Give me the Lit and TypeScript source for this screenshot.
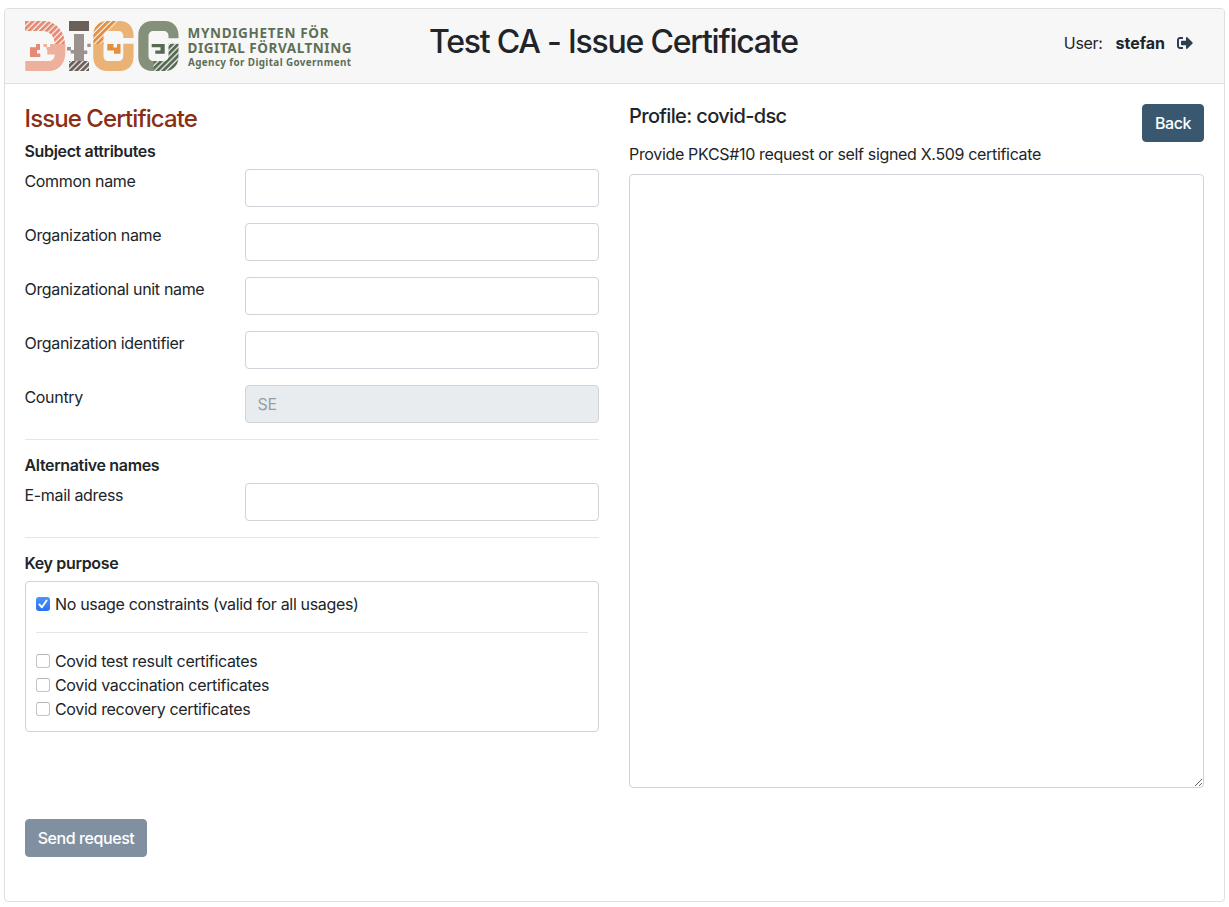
import { LitElement, html, svg, css } from "lit";
import { customElement, property } from "lit/decorators.js";

@customElement("digg-logo")
class DiggLogo extends LitElement {
  static styles = css`
    :host { display: block; width: 330px; height: 50px; }
    svg { display: block; overflow: visible; letter-spacing: 0; }
    .name { font: 700 13.5px "Noto Sans", "Open Sans", sans-serif; fill: #5d7057; }
    .sub { font: 700 9.9px "Noto Sans", "Open Sans", sans-serif; fill: #5d7057; }
  `;
  render() {
    const stripes = (id: string, color: string) => svg`
      <pattern id=${id} width="4.1" height="10" patternUnits="userSpaceOnUse" patternTransform="rotate(45)">
        <rect width="2.9" height="10" fill=${color}></rect>
      </pattern>`;
    return html`
      <svg width="330" height="50" viewBox="25 21 330 50" role="img" aria-label="DIGG">
        <defs>
          ${stripes("s1", "#e58b74")}${stripes("s2", "#6b5f5a")}${stripes("s3", "#e38f3d")}${stripes("s4", "#566b52")}
        </defs>
        <path fill="url(#s1)" d="M25 21H44C56 21 65 32 65 44H54.7C54.7 36 49 31 43 31H25Z"></path>
        <path fill="#ecb09c" d="M50 44H65.3V53C65.3 64 58 71 49 71H25.3V61H49C52.5 61 54.7 58.5 54.7 54.5H47.3V50H50ZM43.5 44H47V47H50V50H46.5V47H43.5Z"></path>
        <path fill="#e58b74" d="M36 44H40V50H37V53.5H40.3V57H30V47.2H36Z"></path>
        <path fill="#6b5f5a" d="M69 21H89V31H69Z"></path>
        <path fill="#9b918d" d="M74 34H84V61H74ZM67 47H71V50H74V53.5H70.7V50.5H67ZM87.3 43.8H90.7V47H87.3ZM84 50.5H87.3V54H84Z"></path>
        <path fill="url(#s2)" d="M69 61H89V71H69Z"></path>
        <path fill="#eab275" d="M118 21H120C128 21 133.5 27 133.5 35V38H123.3V36C123.3 33 121.5 31 118.5 31H109ZM93.3 44H103.5V56C103.5 59 105.5 61 108 61H118.5C121.5 61 123.3 59 123.3 56V43.7H133.5V57C133.5 65.5 128 71 120 71H107C99 71 93.3 65.5 93.3 57Z"></path>
        <path fill="url(#s3)" d="M93.3 44V35C93.3 27 99 21 107 21H118L109 31H108C105.5 31 103.5 33 103.5 36V44Z"></path>
        <path fill="#e38f3d" d="M107.3 44H113.5V47.5H117V44H120.5V53.7H114V50.5H107.3Z"></path>
        <path fill="#85907b" d="M138.3 35C138.3 27 144 21 152 21H165C173 21 178.5 27 178.5 35V38.3H168.5V36C168.5 33 166.5 31 163.5 31H153.5C150.5 31 148.5 33 148.5 36V56C148.5 59 150.5 61 153.5 61V71H152C144 71 138.3 65.5 138.3 57Z"></path>
        <path fill="url(#s4)" d="M178.5 43.7V57C178.5 65.5 173 71 165 71H153.3V61H163.5C166.5 61 168.5 59 168.5 56V43.7Z"></path>
        <path fill="#566b52" d="M151.7 44H164.7V53.7H155.3V50.5H160.5V47.2H151.7Z"></path>
        <text class="name" x="187.5" y="37.5" textLength="141" lengthAdjust="spacing">MYNDIGHETEN FÖR</text>
        <text class="name" x="187.5" y="52.7" textLength="164" lengthAdjust="spacing">DIGITAL FÖRVALTNING</text>
        <text class="sub" x="188" y="65.9" textLength="163" lengthAdjust="spacing">Agency for Digital Government</text>
      </svg>`;
  }
}

@customElement("form-field")
class FormField extends LitElement {
  @property() label = "";
  @property() value = "";
  @property({ type: Boolean }) disabled = false;
  static styles = css`
    :host { display: grid; grid-template-columns: 220.5px 1fr; margin-bottom: 16px; }
    .input {
      box-sizing: border-box; width: 100%; height: 38px; padding: 6px 11.5px; margin: 0;
      font: inherit; letter-spacing: inherit; color: #495057; background: #fff;
      border: 1px solid #ced4da; border-radius: 4px; outline: none;
    }
    .input:disabled { background: #e9ecef; color: #959da8; }
  `;
  render() {
    return html`<label>${this.label}</label>
      <input class="input" .value=${this.value} ?disabled=${this.disabled} aria-label=${this.label} />`;
  }
}

@customElement("check-row")
class CheckRow extends LitElement {
  @property() label = "";
  @property({ type: Boolean }) checked = false;
  static styles = css`
    :host { display: flex; align-items: center; height: 24px; gap: 5px; letter-spacing: -0.33px; }
    .box { box-sizing: border-box; width: 14px; height: 14px; border: 1px solid #c4c4c4; border-top-color: #b4b4b4; border-radius: 3px; background: #fff; }
    .on { border: 0; background: linear-gradient(#4a94fb, #2a70f3); }
    svg { display: block; }
  `;
  render() {
    return html`<span class="box ${this.checked ? "on" : ""}" role="checkbox" aria-checked=${this.checked}>
        ${this.checked
          ? html`<svg width="14" height="14" viewBox="0 0 14 14"><path d="M3.4 7.4L5.9 10.3L10.6 3.5" fill="none" stroke="#fff" stroke-width="1.9" stroke-linecap="round" stroke-linejoin="round"></path></svg>`
          : ""}</span><span>${this.label}</span>`;
  }
}

@customElement("app-root")
class AppRoot extends LitElement {
  static styles = css`
    :host {
      display: block; box-sizing: border-box; height: 907px; padding: 8px 4px 5px; background: #fff;
      font: 400 16px/24px Inter, sans-serif; color: #212529; letter-spacing: -0.33px;
    }
    * { box-sizing: border-box; }
    .card { height: 894px; border: 1px solid #dfdfdf; border-radius: 4px; background: #fff; }
    .head {
      display: grid; grid-template-columns: 404px 1fr auto; height: 75px; padding: 12px 31px 12px 20px;
      background: #f7f7f7; border-bottom: 1px solid #dfdfdf; border-radius: 3px 3px 0 0;
    }
    .title { margin: 2px 0 0; font-size: 32px; font-weight: 500; line-height: 38.4px; letter-spacing: -1.22px; }
    .user { display: flex; align-items: center; height: 24px; margin-top: 10px; }
    .who { font-weight: 700; margin: 0 12px 0 13px; letter-spacing: 0; }
    .body { display: grid; grid-template-columns: 574.5px 575px; column-gap: 30px; padding: 20px 20px 20px 19.5px; }
    .h4 { margin: 0 0 8px; padding-top: 1px; font-size: 24px; font-weight: 500; line-height: 28.8px; color: #8a2f14; letter-spacing: -0.91px; }
    .h6 { margin: 0 0 8px; font-size: 16px; font-weight: 600; line-height: 19.2px; letter-spacing: -0.34px; }
    .rule { height: 1px; margin: 0 0 16px; border: 0; background: #e5e5e5; }
    .purposes { height: 151px; margin-left: 0.5px; padding: 10px; border: 1px solid #ced4da; border-radius: 4px; }
    .purposes .rule { margin: 16px 0; }
    .top { display: flex; justify-content: space-between; align-items: flex-start; height: 38px; }
    .h5 { margin: 0; font-size: 20px; font-weight: 500; line-height: 24px; letter-spacing: -0.65px; }
    .hint { margin: 0 0 8px; }
    .area { display: block; width: 100%; height: 614px; margin: 0; border: 1px solid #ced4da; border-radius: 4px; outline: none; resize: vertical; }
    .btn { height: 38px; padding: 6px 11.5px; margin: 0; border: 1px solid #39576f; border-radius: 4px; background: #39576f; color: #fff; font: inherit; font-weight: 500; letter-spacing: -0.42px; white-space: nowrap; }
    .back { width: 62px; }
    .send { width: 122px; margin: 31px 0 0 0.5px; opacity: 0.65; border-color: #3d5670; background: #3d5670; }
  `;
  render() {
    return html`<div class="card">
      <div class="head">
        <digg-logo></digg-logo>
        <h2 class="title">Test CA - Issue Certificate</h2>
        <div class="user"><span>User:</span><span class="who">stefan</span>
          <svg width="16" height="16" viewBox="0 0 512 512" fill="#2c3e50"><path d="M497 273L329 441c-15 15-41 4.5-41-17v-96H152c-13.3 0-24-10.7-24-24v-96c0-13.3 10.7-24 24-24h136V88c0-21.4 25.9-32 41-17l168 168c9.3 9.4 9.3 24.6 0 34zM192 436v-40c0-6.6-5.4-12-12-12H96c-17.7 0-32-14.3-32-32V160c0-17.7 14.3-32 32-32h84c6.6 0 12-5.4 12-12V76c0-6.6-5.4-12-12-12H96c-53 0-96 43-96 96v192c0 53 43 96 96 96h84c6.6 0 12-5.4 12-12z"></path></svg>
        </div>
      </div>
      <div class="body">
        <div>
          <h4 class="h4">Issue Certificate</h4>
          <h6 class="h6">Subject attributes</h6>
          <form-field label="Common name"></form-field>
          <form-field label="Organization name"></form-field>
          <form-field label="Organizational unit name"></form-field>
          <form-field label="Organization identifier"></form-field>
          <form-field label="Country" value="SE" disabled></form-field>
          <hr class="rule" />
          <h6 class="h6">Alternative names</h6>
          <form-field label="E-mail adress"></form-field>
          <hr class="rule" />
          <h6 class="h6">Key purpose</h6>
          <div class="purposes">
            <check-row label="No usage constraints (valid for all usages)" checked></check-row>
            <hr class="rule" />
            <check-row label="Covid test result certificates"></check-row>
            <check-row label="Covid vaccination certificates"></check-row>
            <check-row label="Covid recovery certificates"></check-row>
          </div>
        </div>
        <div>
          <div class="top"><h5 class="h5">Profile: covid-dsc</h5><button class="btn back">Back</button></div>
          <p class="hint">Provide PKCS#10 request or self signed X.509 certificate</p>
          <textarea class="area" aria-label="Certificate request"></textarea>
        </div>
        <div><button class="btn send">Send request</button></div>
      </div>
    </div>`;
  }
}
